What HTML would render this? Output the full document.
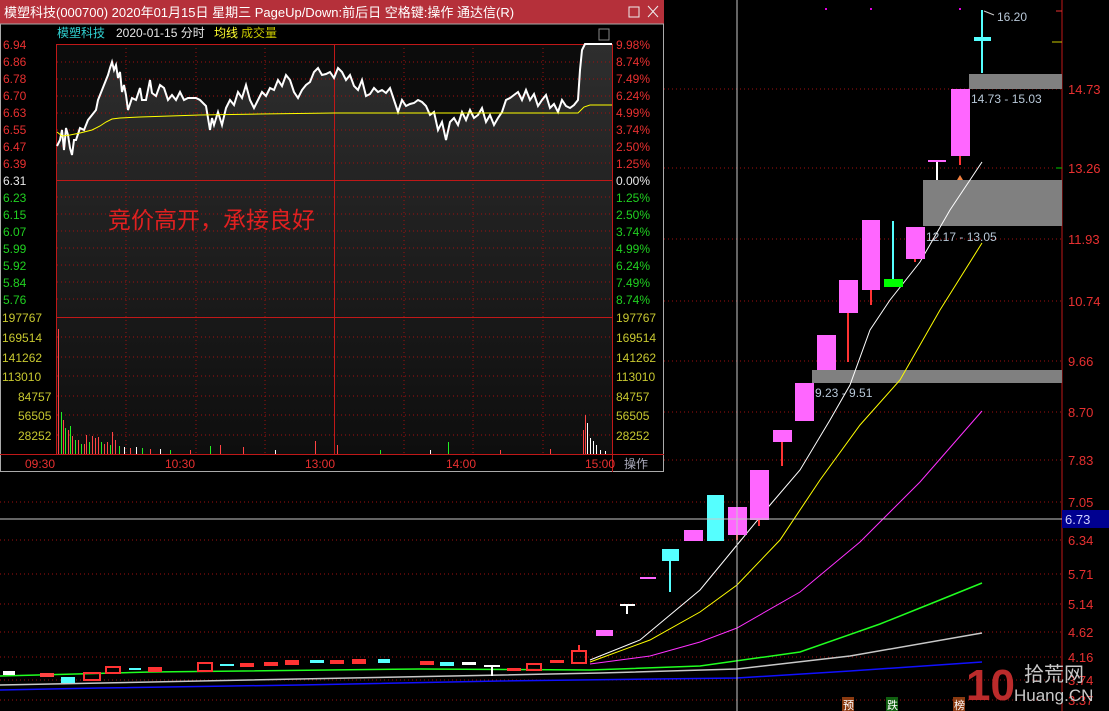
<!DOCTYPE html>
<html><head><meta charset="utf-8"><style>
html,body{margin:0;padding:0;background:#000;width:1109px;height:711px;overflow:hidden}
svg{display:block}
text{font-family:"Liberation Sans","Noto Sans CJK SC",sans-serif}
</style></head><body>
<svg width="1109" height="711" viewBox="0 0 1109 711" xmlns="http://www.w3.org/2000/svg">
<rect width="1109" height="711" fill="#000"/>
<!-- main chart grid -->
<g stroke="#a01010" stroke-dasharray="1,3" stroke-width="1">
<line x1="0" y1="89" x2="1062" y2="89"/><line x1="0" y1="168" x2="1062" y2="168"/>
<line x1="0" y1="239" x2="1062" y2="239"/><line x1="0" y1="301" x2="1062" y2="301"/>
<line x1="0" y1="361" x2="1062" y2="361"/><line x1="0" y1="412" x2="1062" y2="412"/>
<line x1="0" y1="460" x2="1062" y2="460"/><line x1="0" y1="502" x2="1062" y2="502"/>
<line x1="0" y1="540" x2="1062" y2="540"/><line x1="0" y1="574" x2="1062" y2="574"/>
<line x1="0" y1="604" x2="1062" y2="604"/><line x1="0" y1="632" x2="1062" y2="632"/>
<line x1="0" y1="657" x2="1062" y2="657"/><line x1="0" y1="680" x2="1062" y2="680"/>
<line x1="0" y1="700" x2="1062" y2="700"/>
</g>
<line x1="1062" y1="0" x2="1062" y2="711" stroke="#c01818"/>
<g fill="#e83030" font-size="13">
<text x="1068" y="94">14.73</text><text x="1068" y="173">13.26</text><text x="1068" y="244">11.93</text>
<text x="1068" y="306">10.74</text><text x="1068" y="366">9.66</text><text x="1068" y="417">8.70</text>
<text x="1068" y="465">7.83</text><text x="1068" y="507">7.05</text><text x="1068" y="545">6.34</text>
<text x="1068" y="579">5.71</text><text x="1068" y="609">5.14</text><text x="1068" y="637">4.62</text>
<text x="1068" y="662">4.16</text><text x="1068" y="685">3.74</text><text x="1068" y="705">3.37</text>
</g>
<g stroke="#e83030"><line x1="1056" y1="11" x2="1062" y2="11"/></g>
<line x1="1052" y1="42" x2="1062" y2="42" stroke="#c8c800"/>
<line x1="1056" y1="168" x2="1062" y2="168" stroke="#0c0"/>
<g fill="#e000e0"><rect x="825" y="8" width="2" height="2"/><rect x="870" y="8" width="2" height="2"/><rect x="959" y="8" width="2" height="2"/></g>

<!-- gray zones -->
<rect x="969" y="74" width="93" height="15" fill="#808080"/>
<rect x="923" y="180" width="139" height="46" fill="#808080"/>
<rect x="812" y="370" width="250" height="13" fill="#808080"/>
<g fill="#b8c8d8" font-size="12">
<text x="971" y="103">14.73 - 15.03</text><text x="926" y="241">12.17 - 13.05</text>
<text x="815" y="397">9.23 - 9.51</text><text x="997" y="21">16.20</text></g>
<path d="M984 11 L994 15" stroke="#ccc"/>

<!-- MA lines -->
<polyline fill="none" stroke="#fff" stroke-width="1" points="590,660 640,640 700,590 737,545 770,505 800,470 830,420 850,385 870,330 890,300 920,262 950,210 982,162"/>
<polyline fill="none" stroke="#ffff00" stroke-width="1" points="590,662 650,640 700,612 737,585 780,540 820,480 860,425 900,380 940,310 982,243"/>
<polyline fill="none" stroke="#ff30ff" stroke-width="1" points="590,664 650,656 700,642 737,628 800,592 860,542 920,482 982,411"/>
<polyline fill="none" stroke="#20ff20" stroke-width="1.5" points="0,676 150,672 420,669 590,670 700,666 800,652 880,624 930,604 982,583"/>
<polyline fill="none" stroke="#c8c8c8" stroke-width="1.5" points="0,685 200,681 400,677 600,673 737,669 850,656 982,633"/>
<polyline fill="none" stroke="#1010ff" stroke-width="1.5" points="0,690 100,688 300,685 500,681 737,678 850,671 982,662"/>

<!-- small early candles -->
<g>
<rect x="3" y="671" width="12" height="4" fill="#fff"/>
<rect x="40" y="673" width="14" height="4" fill="#f44"/>
<rect x="61" y="677" width="14" height="6" fill="#5ff"/>
<rect x="84" y="673" width="16" height="7" fill="none" stroke="#f33" stroke-width="2"/>
<rect x="106" y="667" width="14" height="6" fill="none" stroke="#f33" stroke-width="2"/>
<rect x="148" y="667" width="14" height="5" fill="#f33"/>
<rect x="129" y="668" width="12" height="2" fill="#5ff"/>
<rect x="198" y="663" width="14" height="8" fill="none" stroke="#f33" stroke-width="2"/>
<rect x="220" y="664" width="14" height="2" fill="#5ff"/>
<rect x="240" y="663" width="14" height="4" fill="#f33"/>
<rect x="264" y="662" width="14" height="4" fill="#f33"/>
<rect x="285" y="660" width="14" height="5" fill="#f33"/>
<rect x="310" y="660" width="14" height="3" fill="#5ff"/>
<rect x="330" y="660" width="14" height="4" fill="#f33"/>
<rect x="352" y="659" width="14" height="5" fill="#f33"/>
<rect x="378" y="659" width="12" height="4" fill="#5ff"/>
<rect x="420" y="661" width="14" height="4" fill="#f33"/>
<rect x="440" y="662" width="14" height="4" fill="#5ff"/>
<rect x="462" y="662" width="14" height="3" fill="#fff"/>
<line x1="492" y1="667" x2="492" y2="676" stroke="#fff" stroke-width="2"/>
<rect x="484" y="665" width="16" height="2" fill="#fff"/>
<rect x="507" y="668" width="14" height="3" fill="#f33"/>
<rect x="527" y="664" width="14" height="6" fill="none" stroke="#f33" stroke-width="2"/>
<rect x="550" y="660" width="14" height="3" fill="#f33"/>
<rect x="572" y="651" width="14" height="12" fill="none" stroke="#f33" stroke-width="2"/>
<line x1="579" y1="645" x2="579" y2="651" stroke="#f33" stroke-width="2"/>
</g>

<!-- main candles -->
<g>
<rect x="596" y="630" width="17" height="6" fill="#ff66ff"/>
<rect x="620" y="604" width="15" height="2" fill="#fff"/><line x1="627" y1="606" x2="627" y2="614" stroke="#fff" stroke-width="2"/>
<rect x="640" y="577" width="16" height="2" fill="#ff66ff"/>
<line x1="670" y1="555" x2="670" y2="592" stroke="#5ff" stroke-width="2"/><rect x="662" y="549" width="17" height="12" fill="#5ff"/>
<rect x="684" y="530" width="19" height="11" fill="#ff66ff"/>
<rect x="707" y="495" width="17" height="46" fill="#5ff"/>
<line x1="737" y1="530" x2="737" y2="540" stroke="#f33" stroke-width="2"/><rect x="728" y="507" width="19" height="28" fill="#ff66ff"/>
<line x1="759" y1="515" x2="759" y2="526" stroke="#f33" stroke-width="2"/><rect x="750" y="470" width="19" height="50" fill="#ff66ff"/>
<line x1="782" y1="440" x2="782" y2="466" stroke="#f33" stroke-width="2"/><rect x="773" y="430" width="19" height="12" fill="#ff66ff"/>
<rect x="795" y="383" width="19" height="38" fill="#ff66ff"/>
<rect x="817" y="335" width="19" height="35" fill="#ff66ff"/>
<line x1="848" y1="310" x2="848" y2="362" stroke="#f33" stroke-width="2"/><rect x="839" y="280" width="19" height="33" fill="#ff66ff"/>
<line x1="871" y1="288" x2="871" y2="305" stroke="#f33" stroke-width="2"/><rect x="862" y="220" width="18" height="70" fill="#ff66ff"/>
<line x1="893" y1="221" x2="893" y2="280" stroke="#5ff" stroke-width="2"/><rect x="884" y="279" width="19" height="8" fill="#0f0"/>
<line x1="915" y1="255" x2="915" y2="262" stroke="#f33" stroke-width="2"/><rect x="906" y="227" width="19" height="32" fill="#ff66ff"/>
<rect x="928" y="160" width="18" height="2" fill="#ff66ff"/><line x1="937" y1="162" x2="937" y2="180" stroke="#fff" stroke-width="2"/>
<path d="M957 180 L960 175 L963 180 Z" fill="#f08040"/>
<line x1="960" y1="150" x2="960" y2="165" stroke="#f33" stroke-width="2"/><rect x="951" y="89" width="19" height="67" fill="#ff66ff"/>
<line x1="982" y1="10" x2="982" y2="73" stroke="#5ff" stroke-width="2"/><rect x="974" y="37" width="17" height="4" fill="#5ff"/>
</g>

<!-- crosshair -->
<line x1="737" y1="0" x2="737" y2="711" stroke="#c8c8c8"/>
<line x1="0" y1="519" x2="1062" y2="519" stroke="#c8c8c8"/>
<rect x="1062" y="510" width="47" height="18" fill="#000090"/>
<text x="1065" y="524" fill="#d0d0ff" font-size="13">6.73</text>

<!-- bottom labels -->
<rect x="842" y="697" width="12" height="14" fill="#8a3a10"/><text x="843" y="709" fill="#fff" font-size="11">预</text>
<rect x="886" y="697" width="12" height="14" fill="#106010"/><text x="887" y="709" fill="#fff" font-size="11">跌</text>
<rect x="953" y="697" width="12" height="14" fill="#8a3a10"/><text x="954" y="709" fill="#fff" font-size="11">榜</text>
<!-- watermark -->
<text x="966" y="700" fill="#d03030" font-size="44" font-weight="bold" opacity="0.9">10</text>
<text x="1024" y="681" fill="#c8c8c8" font-size="20">拾荒网</text>
<text x="1014" y="701" fill="#c8c8c8" font-size="17">Huang.CN</text>

<!-- popup -->
<rect x="0" y="0" width="664" height="472" fill="#000"/>
<rect x="0" y="0" width="664" height="24" fill="#b5303a"/>
<text x="4" y="17" fill="#fff" font-size="13">模塑科技(000700) 2020年01月15日 星期三 PageUp/Down:前后日 空格键:操作 通达信(R)</text>
<rect x="629" y="7" width="10" height="10" fill="none" stroke="#eee"/>
<path d="M648 6 L658 17 M658 6 L648 17" stroke="#eee"/>
<rect x="0.5" y="24" width="663" height="447.5" fill="none" stroke="#aaa"/>
<text x="57" y="37" fill="#30d0d0" font-size="12">模塑科技</text>
<text x="116" y="37" fill="#e8e8e8" font-size="12">2020-01-15 分时</text>
<text x="214" y="37" fill="#ffff30" font-size="12">均线</text>
<text x="241" y="37" fill="#c8c800" font-size="12">成交量</text>
<rect x="599" y="29" width="10" height="11" fill="none" stroke="#888"/>
<defs><linearGradient id="g" x1="0" y1="0" x2="0" y2="1"><stop offset="0" stop-color="#2e2e2e"/><stop offset="1" stop-color="#0e0e0e"/></linearGradient></defs>
<rect x="57" y="44" width="555" height="410" fill="#0c0c0c"/>
<polygon fill="url(#g)" points="57,146 60,140 62,130 64,150 66,128 68,135 70,148 72,155 74,140 76,140 80,128 84,130 88,120 92,115 96,110 98,100 102,90 106,80 108,75 110,68 112,62 114,70 116,65 118,78 120,72 122,92 124,85 126,95 128,110 132,98 136,100 140,88 142,100 146,100 150,80 152,93 156,96 160,85 164,88 168,100 172,95 176,100 180,92 184,100 188,98 192,98 196,98 200,100 206,106 210,130 212,118 214,125 218,112 222,125 226,108 230,100 234,105 238,92 242,98 246,85 250,100 254,108 258,100 262,92 266,96 270,88 274,90 278,80 282,86 286,75 290,80 294,92 298,98 302,90 306,85 310,82 314,72 318,68 322,75 326,74 330,72 334,78 338,68 342,72 346,80 350,75 354,86 358,90 362,80 366,96 370,94 374,88 378,92 382,90 386,93 390,88 394,100 398,112 402,100 406,106 410,104 414,103 418,100 422,102 426,106 430,115 434,112 438,130 442,122 446,140 450,122 454,118 458,125 462,112 466,120 470,110 474,118 478,115 482,108 486,122 490,115 494,125 498,118 502,112 506,100 510,98 514,95 518,92 522,100 526,90 530,100 534,94 538,106 542,100 546,95 550,108 554,104 558,112 562,100 566,106 570,108 574,105 578,100 580,70 582,50 585,44 612,44 612,454 57,454"/>
<!-- popup grid -->
<g stroke="#a01010" stroke-dasharray="1,3">
<line x1="57" y1="62" x2="612" y2="62"/><line x1="57" y1="79" x2="612" y2="79"/><line x1="57" y1="96" x2="612" y2="96"/>
<line x1="57" y1="113" x2="612" y2="113"/><line x1="57" y1="130" x2="612" y2="130"/><line x1="57" y1="146" x2="612" y2="146"/>
<line x1="57" y1="163" x2="612" y2="163"/><line x1="57" y1="197" x2="612" y2="197"/><line x1="57" y1="214" x2="612" y2="214"/>
<line x1="57" y1="231" x2="612" y2="231"/><line x1="57" y1="248" x2="612" y2="248"/><line x1="57" y1="265" x2="612" y2="265"/>
<line x1="57" y1="282" x2="612" y2="282"/><line x1="57" y1="299" x2="612" y2="299"/>
<line x1="57" y1="337" x2="612" y2="337"/><line x1="57" y1="357" x2="612" y2="357"/><line x1="57" y1="376" x2="612" y2="376"/>
<line x1="57" y1="396" x2="612" y2="396"/><line x1="57" y1="415" x2="612" y2="415"/><line x1="57" y1="435" x2="612" y2="435"/>
<line x1="126" y1="44" x2="126" y2="454"/><line x1="196" y1="44" x2="196" y2="454"/><line x1="265" y1="44" x2="265" y2="454"/>
<line x1="404" y1="44" x2="404" y2="454"/><line x1="473" y1="44" x2="473" y2="454"/><line x1="543" y1="44" x2="543" y2="454"/>
</g>
<g stroke="#c01818">
<line x1="57" y1="44.5" x2="612" y2="44.5"/><line x1="57" y1="180.5" x2="612" y2="180.5"/>
<line x1="57" y1="317.5" x2="612" y2="317.5"/><line x1="0" y1="454.5" x2="664" y2="454.5"/>
<line x1="56.5" y1="44" x2="56.5" y2="454"/><line x1="612.5" y1="44" x2="612.5" y2="472"/>
<line x1="334.5" y1="44" x2="334.5" y2="454"/>
</g>
<polyline fill="none" stroke="#fff" stroke-width="2" points="57,146 60,140 62,130 64,150 66,128 68,135 70,148 72,155 74,140 76,140 80,128 84,130 88,120 92,115 96,110 98,100 102,90 106,80 108,75 110,68 112,62 114,70 116,65 118,78 120,72 122,92 124,85 126,95 128,110 132,98 136,100 140,88 142,100 146,100 150,80 152,93 156,96 160,85 164,88 168,100 172,95 176,100 180,92 184,100 188,98 192,98 196,98 200,100 206,106 210,130 212,118 214,125 218,112 222,125 226,108 230,100 234,105 238,92 242,98 246,85 250,100 254,108 258,100 262,92 266,96 270,88 274,90 278,80 282,86 286,75 290,80 294,92 298,98 302,90 306,85 310,82 314,72 318,68 322,75 326,74 330,72 334,78 338,68 342,72 346,80 350,75 354,86 358,90 362,80 366,96 370,94 374,88 378,92 382,90 386,93 390,88 394,100 398,112 402,100 406,106 410,104 414,103 418,100 422,102 426,106 430,115 434,112 438,130 442,122 446,140 450,122 454,118 458,125 462,112 466,120 470,110 474,118 478,115 482,108 486,122 490,115 494,125 498,118 502,112 506,100 510,98 514,95 518,92 522,100 526,90 530,100 534,94 538,106 542,100 546,95 550,108 554,104 558,112 562,100 566,106 570,108 574,105 578,100 580,70 582,50 585,44 612,44"/>
<polyline fill="none" stroke="#ffff00" stroke-width="1" points="57,132 62,136 70,135 80,133 92,130 100,126 106,122 112,119 120,118 140,117 170,116 200,115 260,114 334,113 400,113 450,113 520,113 578,113 584,107 590,105 612,105"/>
<text x="108" y="228" fill="#e02020" font-size="23">竞价高开，承接良好</text>
<!-- popup axis labels -->
<g font-size="12">
<g fill="#e83030">
<text x="3" y="49">6.94</text><text x="3" y="66">6.86</text><text x="3" y="83">6.78</text><text x="3" y="100">6.70</text>
<text x="3" y="117">6.63</text><text x="3" y="134">6.55</text><text x="3" y="151">6.47</text><text x="3" y="168">6.39</text>
<text x="616" y="49">9.98%</text><text x="616" y="66">8.74%</text><text x="616" y="83">7.49%</text><text x="616" y="100">6.24%</text>
<text x="616" y="117">4.99%</text><text x="616" y="134">3.74%</text><text x="616" y="151">2.50%</text><text x="616" y="168">1.25%</text>
</g>
<text x="3" y="185" fill="#e8e8e8">6.31</text><text x="616" y="185" fill="#e8e8e8">0.00%</text>
<g fill="#20d020">
<text x="3" y="202">6.23</text><text x="3" y="219">6.15</text><text x="3" y="236">6.07</text><text x="3" y="253">5.99</text>
<text x="3" y="270">5.92</text><text x="3" y="287">5.84</text><text x="3" y="304">5.76</text>
<text x="616" y="202">1.25%</text><text x="616" y="219">2.50%</text><text x="616" y="236">3.74%</text><text x="616" y="253">4.99%</text>
<text x="616" y="270">6.24%</text><text x="616" y="287">7.49%</text><text x="616" y="304">8.74%</text>
</g>
<g fill="#c8c830">
<text x="2" y="322">197767</text><text x="2" y="342">169514</text><text x="2" y="362">141262</text><text x="2" y="381">113010</text>
<text x="18" y="401">84757</text><text x="18" y="420">56505</text><text x="18" y="440">28252</text>
<text x="616" y="322">197767</text><text x="616" y="342">169514</text><text x="616" y="362">141262</text><text x="616" y="381">113010</text>
<text x="616" y="401">84757</text><text x="616" y="420">56505</text><text x="616" y="440">28252</text>
</g>
<g fill="#e83030">
<text x="25" y="468">09:30</text><text x="165" y="468">10:30</text><text x="305" y="468">13:00</text>
<text x="446" y="468">14:00</text><text x="585" y="468">15:00</text></g>
<text x="624" y="468" fill="#aab">操作</text>
</g>
<!-- volume bars -->
<g stroke-width="1">
<line x1="58.5" y1="329" x2="58.5" y2="454" stroke="#f44"/>
<line x1="61.5" y1="412" x2="61.5" y2="454" stroke="#2e2"/>
<line x1="63.5" y1="420" x2="63.5" y2="454" stroke="#f44"/>
<line x1="65.5" y1="428" x2="65.5" y2="454" stroke="#2e2"/>
<line x1="68.5" y1="430" x2="68.5" y2="454" stroke="#f44"/>
<line x1="70.5" y1="426" x2="70.5" y2="454" stroke="#2e2"/>
<line x1="72.5" y1="436" x2="72.5" y2="454" stroke="#f44"/>
<line x1="75.5" y1="440" x2="75.5" y2="454" stroke="#2e2"/>
<line x1="78.5" y1="440" x2="78.5" y2="454" stroke="#f44"/>
<line x1="81.5" y1="444" x2="81.5" y2="454" stroke="#2e2"/>
<line x1="84.5" y1="444" x2="84.5" y2="454" stroke="#f44"/>
<line x1="86.5" y1="435" x2="86.5" y2="454" stroke="#f44"/>
<line x1="89.5" y1="442" x2="89.5" y2="454" stroke="#2e2"/>
<line x1="92.5" y1="436" x2="92.5" y2="454" stroke="#f44"/>
<line x1="95.5" y1="438" x2="95.5" y2="454" stroke="#f44"/>
<line x1="98.5" y1="437" x2="98.5" y2="454" stroke="#f44"/>
<line x1="101.5" y1="442" x2="101.5" y2="454" stroke="#2e2"/>
<line x1="104.5" y1="444" x2="104.5" y2="454" stroke="#f44"/>
<line x1="107.5" y1="442" x2="107.5" y2="454" stroke="#f44"/>
<line x1="110.5" y1="445" x2="110.5" y2="454" stroke="#2e2"/>
<line x1="112.5" y1="432" x2="112.5" y2="454" stroke="#f44"/>
<line x1="115.5" y1="440" x2="115.5" y2="454" stroke="#f44"/>
<line x1="119.5" y1="446" x2="119.5" y2="454" stroke="#2e2"/>
<line x1="124.5" y1="447" x2="124.5" y2="454" stroke="#fff"/>
<line x1="130.5" y1="448" x2="130.5" y2="454" stroke="#f44"/>
<line x1="136.5" y1="447" x2="136.5" y2="454" stroke="#fff"/>
<line x1="142.5" y1="448" x2="142.5" y2="454" stroke="#2e2"/>
<line x1="150.5" y1="449" x2="150.5" y2="454" stroke="#f44"/>
<line x1="160.5" y1="449" x2="160.5" y2="454" stroke="#fff"/>
<line x1="170.5" y1="450" x2="170.5" y2="454" stroke="#2e2"/>
<line x1="190.5" y1="450" x2="190.5" y2="454" stroke="#f44"/>
<line x1="210.5" y1="446" x2="210.5" y2="454" stroke="#2e2"/>
<line x1="220.5" y1="445" x2="220.5" y2="454" stroke="#f44"/>
<line x1="243.5" y1="447" x2="243.5" y2="454" stroke="#f44"/>
<line x1="275.5" y1="450" x2="275.5" y2="454" stroke="#fff"/>
<line x1="315.5" y1="441" x2="315.5" y2="454" stroke="#f44"/>
<line x1="337.5" y1="445" x2="337.5" y2="454" stroke="#f44"/>
<line x1="380.5" y1="450" x2="380.5" y2="454" stroke="#2e2"/>
<line x1="430.5" y1="450" x2="430.5" y2="454" stroke="#fff"/>
<line x1="448.5" y1="442" x2="448.5" y2="454" stroke="#2e2"/>
<line x1="500.5" y1="450" x2="500.5" y2="454" stroke="#f44"/>
<line x1="550.5" y1="449" x2="550.5" y2="454" stroke="#f44"/>
<line x1="583.5" y1="430" x2="583.5" y2="454" stroke="#f44"/>
<line x1="585.5" y1="415" x2="585.5" y2="454" stroke="#f44"/>
<line x1="587.5" y1="423" x2="587.5" y2="454" stroke="#fff"/>
<line x1="590.5" y1="438" x2="590.5" y2="454" stroke="#fff"/>
<line x1="593.5" y1="441" x2="593.5" y2="454" stroke="#fff"/>
<line x1="596.5" y1="445" x2="596.5" y2="454" stroke="#fff"/>
<line x1="600.5" y1="450" x2="600.5" y2="454" stroke="#fff"/>
<line x1="605.5" y1="451" x2="605.5" y2="454" stroke="#fff"/>
</g>
</svg>
</body></html>
